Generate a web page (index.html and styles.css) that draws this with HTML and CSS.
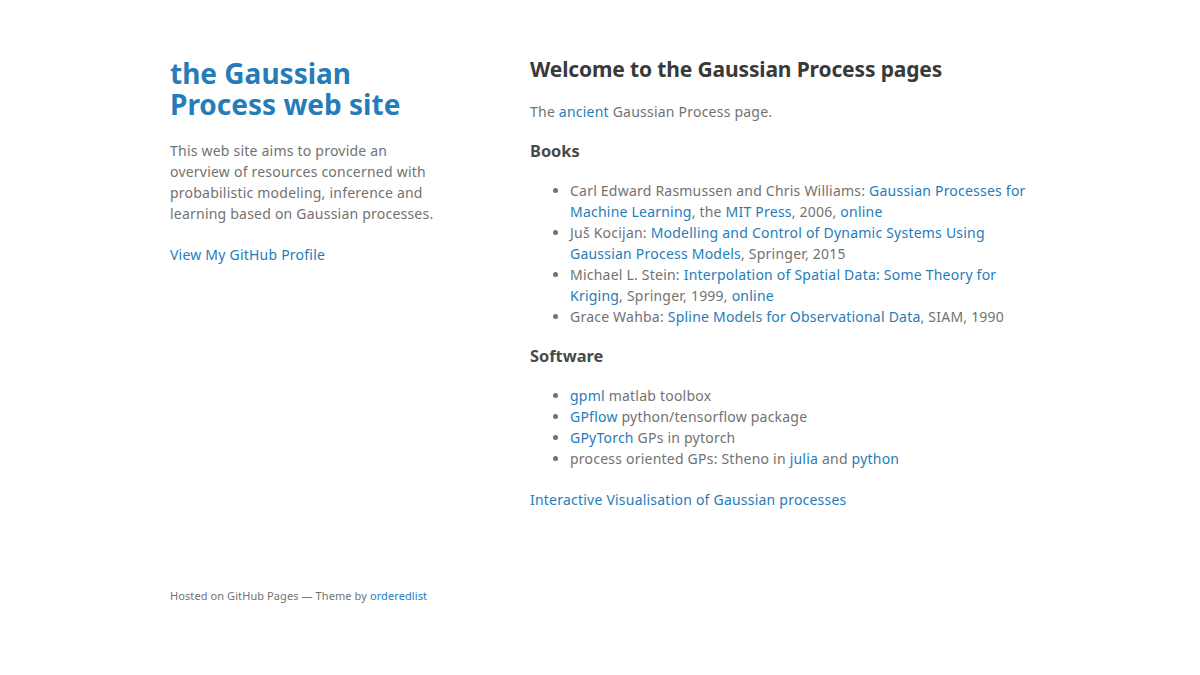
FILE: index.html
```html
<!DOCTYPE html>
<html lang="en">
<head>
<meta charset="utf-8">
<title>the Gaussian Process web site</title>
<link rel="stylesheet" href="styles.css">
</head>
<body>
<div class="wrapper">
  <div class="side">
    <header>
      <h1><a href="#">the Gaussian Process web site</a></h1>
      <p>This web site aims to provide an overview of resources concerned with probabilistic modeling, inference and learning based on Gaussian processes.</p>
      <p class="view"><a href="#">View My GitHub Profile</a></p>
    </header>
    <footer>
      <p><small>Hosted on GitHub Pages &mdash; Theme by <a href="#">orderedlist</a></small></p>
    </footer>
  </div>
  <section class="main">
    <h2>Welcome to the Gaussian Process pages</h2>
    <p>The <a href="#">ancient</a> Gaussian Process page.</p>
    <h3>Books</h3>
    <ul>
      <li>Carl Edward Rasmussen and Chris Williams: <a href="#">Gaussian Processes for Machine Learning</a>, the <a href="#">MIT Press</a>, 2006, <a href="#">online</a></li>
      <li>Juš Kocijan: <a href="#">Modelling and Control of Dynamic Systems Using Gaussian Process Models</a>, Springer, 2015</li>
      <li>Michael L. Stein: <a href="#">Interpolation of Spatial Data: Some Theory for Kriging</a>, Springer, 1999, <a href="#">online</a></li>
      <li>Grace Wahba: <a href="#">Spline Models for Observational Data</a>, SIAM, 1990</li>
    </ul>
    <h3>Software</h3>
    <ul>
      <li><a href="#">gpml</a> matlab toolbox</li>
      <li><a href="#">GPflow</a> python/tensorflow package</li>
      <li><a href="#">GPyTorch</a> GPs in pytorch</li>
      <li>process oriented GPs: Stheno in <a href="#">julia</a> and <a href="#">python</a></li>
    </ul>
    <p><a href="#">Interactive Visualisation of Gaussian processes</a></p>
  </section>
</div>
</body>
</html>
```

FILE: styles.css
```css
html, body {
  margin: 0;
}
body {
  background-color: #fff;
  padding: 58px;
  font: 14px/1.5 "Noto Sans", "Helvetica Neue", Helvetica, Arial, sans-serif;
  color: #727272;
  font-weight: 400;
  letter-spacing: 0.22px;
}
h1, h2, h3 {
  color: #222;
  margin: 0 0 20px;
  line-height: 1.1;
  font-weight: 700;
  letter-spacing: 0;
}
p, ul {
  margin: 0 0 20px;
}
h1 {
  font-size: 28px;
}
h2 {
  font-size: 21px;
  color: #393939;
  letter-spacing: -0.14px;
}
h3 {
  font-size: 16.38px;
  color: #494949;
}
ul {
  padding-left: 40px;
}
a {
  color: #267CB9;
  text-decoration: none;
}
small {
  font-size: 11px;
  letter-spacing: 0.09px;
}
.wrapper {
  width: 860px;
  margin: 0 auto;
  display: flex;
  justify-content: space-between;
}
.side {
  width: 270px;
  height: calc(100vh - 116px);
  display: flex;
  flex-direction: column;
}
.side footer {
  margin-top: auto;
}
.side footer p {
  margin: 0 0 12px;
}
.main {
  width: 500px;
  padding-bottom: 50px;
}
```
